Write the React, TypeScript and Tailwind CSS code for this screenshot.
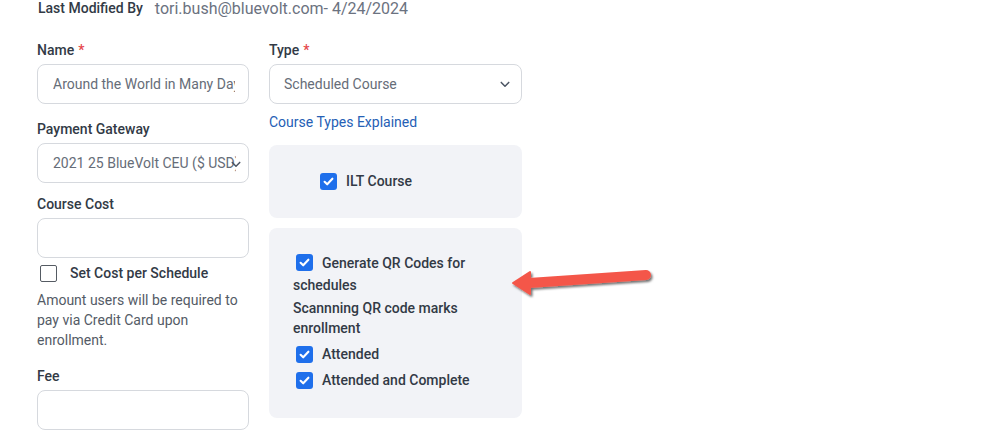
import { FC, ReactNode } from 'react';

const Check: FC<{ checked?: boolean; className?: string }> = ({ checked, className = '' }) =>
  checked ? (
    <span className={`inline-flex h-[17px] w-[17px] shrink-0 items-center justify-center rounded-[3px] bg-[#1f6feb] align-middle ${className}`}>
      <svg viewBox="0 0 16 16" className="h-[13px] w-[13px]" fill="none" stroke="white" strokeWidth="2.6" strokeLinecap="round" strokeLinejoin="round">
        <path d="M3.2 8.4 6.4 11.4 12.8 4.6" />
      </svg>
    </span>
  ) : (
    <span className={`inline-block h-[17px] w-[17px] shrink-0 rounded-[2px] border border-[#555b63] bg-white align-middle ${className}`} />
  );

const Label: FC<{ children: ReactNode; required?: boolean }> = ({ children, required }) => (
  <div className="flex h-[20px] items-center text-[14px] font-medium text-[#323a46]">
    {children}
    {required && <span className="ml-[4px] text-[#e5484d]">*</span>}
  </div>
);

const Input: FC<{ value?: string }> = ({ value }) => (
  <div className="mt-[4px] flex h-[40px] items-center rounded-[8px] border border-[#d6d9de] bg-white pl-[15px] pr-[13px] text-[14px] text-[#666d78]">
    <span className="min-w-0 flex-1 overflow-hidden whitespace-nowrap">{value}</span>
  </div>
);

const Chevron: FC = () => (
  <svg viewBox="0 0 12 8" className="h-[7px] w-[10px]" fill="none" stroke="#4b5563" strokeWidth="1.8" strokeLinecap="round" strokeLinejoin="round">
    <path d="M1.5 1.5 6 6 10.5 1.5" />
  </svg>
);

export default function App() {
  return (
    <div className="relative h-[438px] w-[981px] overflow-hidden bg-white font-['Roboto',sans-serif]">
      <div className="flex h-[17px] items-center gap-[12px] pl-[38px]">
        <span className="text-[14px] font-medium text-[#323a46]">Last Modified By</span>
        <span className="text-[16px] text-[#6b7280]">tori.bush@bluevolt.com- 4/24/2024</span>
      </div>

      <div className="mt-[23px] flex gap-[20px] pl-[37px]">
        <div className="flex w-[212px] flex-col">
          <Label required>Name</Label>
          <Input value="Around the World in Many Days" />

          <div className="mt-[15px]">
            <Label>Payment Gateway</Label>
          </div>
          <div className="relative mt-[4px] flex h-[40px] items-center rounded-[8px] border border-[#d6d9de] bg-white pl-[15px] pr-[12px] text-[14px] text-[#666d78]">
            <span className="min-w-0 flex-1 overflow-hidden whitespace-nowrap">2021 25 BlueVolt CEU ($ USD)</span>
            <div className="absolute right-[7px] top-[17px]">
              <Chevron />
            </div>
          </div>

          <div className="mt-[11px]">
            <Label>Course Cost</Label>
          </div>
          <Input />

          <div className="mt-[6px] flex h-[18px] items-center pl-[3px]">
            <Check />
            <span className="ml-[13px] text-[14px] font-medium text-[#323a46]">Set Cost per Schedule</span>
          </div>

          <p className="mt-[8px] text-[14px] leading-[20px] text-[#545b66]">
            Amount users will be required to pay via Credit Card upon enrollment.
          </p>

          <div className="mt-[16px]">
            <Label>Fee</Label>
          </div>
          <Input />
        </div>

        <div className="flex w-[253px] flex-col">
          <Label required>Type</Label>
          <div className="mt-[4px] flex h-[40px] items-center justify-between rounded-[8px] border border-[#d6d9de] bg-white pl-[14px] pr-[11px] text-[14px] text-[#666d78]">
            <span>Scheduled Course</span>
            <Chevron />
          </div>
          <div className="mt-[8px] flex h-[20px] items-center text-[14px] text-[#2560b5]">Course Types Explained</div>

          <div className="mt-[13px] h-[73px] rounded-[8px] bg-[#f2f3f7] pl-[51px] pt-[27px]">
            <div className="flex h-[18px] items-center gap-[9px]">
              <Check checked />
              <span className="text-[14px] font-medium text-[#323a46]">ILT Course</span>
            </div>
          </div>

          <div className="mt-[10px] h-[190px] rounded-[8px] bg-[#f2f3f7] pl-[24px] pr-[24px] pt-[24px] text-[14px] text-[#323a46]">
            <p className="font-medium leading-[22px]">
              <Check checked className="ml-[3px] mr-[9px] -mt-[3px]" />
              Generate QR Codes for schedules
            </p>
            <p className="mt-[2px] font-medium leading-[20px]">Scannning QR code marks enrollment</p>
            <div className="mt-[6px] flex h-[20px] items-center gap-[9px] pl-[3px]">
              <Check checked />
              <span className="font-medium">Attended</span>
            </div>
            <div className="mt-[6px] flex h-[20px] items-center gap-[9px] pl-[3px]">
              <Check checked />
              <span className="font-medium">Attended and Complete</span>
            </div>
          </div>
        </div>
      </div>

      {/* annotation arrow */}
      <svg className="absolute left-[505px] top-[262px]" width="150" height="40" viewBox="0 0 150 40">
        <defs>
          <filter id="sh" x="-10%" y="-40%" width="130%" height="200%">
            <feDropShadow dx="1.5" dy="2" stdDeviation="1.2" floodColor="#000" floodOpacity="0.55" />
          </filter>
        </defs>
        <g filter="url(#sh)">
          <line x1="24" y1="21" x2="141" y2="13" stroke="#f4574a" strokeWidth="10" strokeLinecap="round" />
          <path d="M8 21 L25 10 L25 32 Z" fill="#f4574a" stroke="#f4574a" strokeWidth="2" strokeLinejoin="round" />
        </g>
      </svg>
    </div>
  );
}
